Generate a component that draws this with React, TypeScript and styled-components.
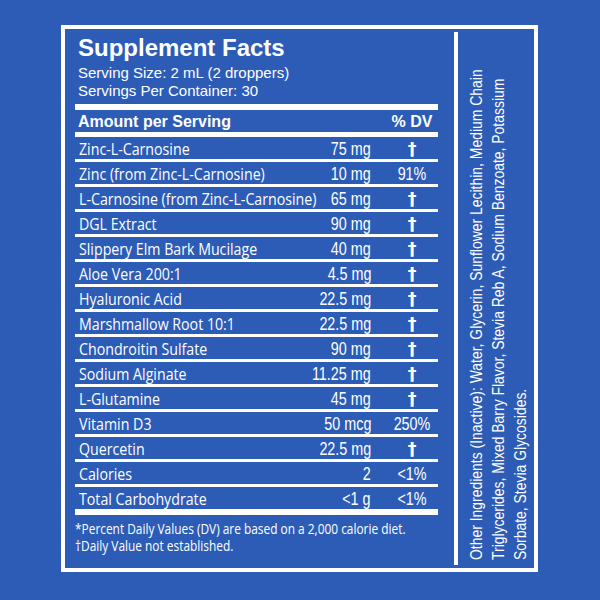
import React from "react";
import styled, { createGlobalStyle } from "styled-components";

const BLUE = "#2c5cb6";
const SANS = `"Liberation Sans", Arial, Helvetica, sans-serif`;
const HUMAN = `"Open Sans", "Noto Sans", sans-serif`;

const GlobalStyle = createGlobalStyle`
  html, body { margin: 0; padding: 0; background: ${BLUE}; }
  body { width: 600px; height: 600px; overflow: hidden; }
`;

const Page = styled.div`
  width: 600px;
  height: 600px;
  box-sizing: border-box;
  padding: 25px 0 0 61px;
  background: ${BLUE};
  color: #fff;
  overflow: hidden;
`;

const Label = styled.div`
  box-sizing: border-box;
  width: 477px;
  height: 547px;
  border: 4px solid #fff;
  display: grid;
  grid-template-columns: 389px 4px 76px;
  grid-template-rows: 539px;
`;

const FactsPanel = styled.div`
  display: flex;
  flex-direction: column;
  padding: 5px 16px 0 10px;
  min-width: 0;
`;

const Title = styled.h1`
  margin: 0 0 0 3px;
  font-family: ${SANS};
  font-weight: 700;
  font-size: 24px;
  line-height: 28px;
`;

const ServingLine = styled.div<{ $first?: boolean }>`
  margin: ${(p) => (p.$first ? "2px" : "0")} 0 0 3px;
  font-family: ${SANS};
  font-size: 15px;
  line-height: 17.5px;
`;

const Rule = styled.div<{ $h: number; $top?: number }>`
  height: ${(p) => p.$h}px;
  margin-top: ${(p) => p.$top ?? 0}px;
  background: #fff;
`;

const HeaderRow = styled.div`
  display: grid;
  grid-template-columns: minmax(0, 1fr) 52px;
  align-items: center;
  height: 22px;
  padding: 1px 0 0 3px;
  box-sizing: border-box;
  font-family: ${SANS};
  font-weight: 700;
  font-size: 16px;
  line-height: 21px;
`;

const HeaderDV = styled.span`
  text-align: center;
  white-space: nowrap;
`;

const Rows = styled.div`
  display: flex;
  flex-direction: column;
`;

const Row = styled.div`
  display: grid;
  grid-template-columns: minmax(0, 1fr) auto 52px;
  column-gap: 15px;
  align-items: center;
  height: 22px;
  padding-left: 4px;
  border-bottom: 3px solid #fff;
  &:last-child {
    border-bottom: 0;
  }
`;

const Name = styled.span`
  font-family: ${HUMAN};
  font-size: 16.5px;
  line-height: 22px;
  white-space: nowrap;
  transform: scaleX(0.86);
  transform-origin: left center;
`;

const Amount = styled.span`
  font-family: ${SANS};
  font-size: 17.5px;
  line-height: 22px;
  padding-top: 1px;
  text-align: right;
  white-space: nowrap;
  transform: scaleX(0.82);
  transform-origin: right center;
`;

const DV = styled.span<{ $dagger?: boolean }>`
  font-family: ${(p) => (p.$dagger ? `"DejaVu Sans", ${SANS}` : SANS)};
  font-weight: ${(p) => (p.$dagger ? 700 : 400)};
  font-size: 17.5px;
  line-height: 22px;
  padding-top: 1px;
  text-align: center;
  white-space: nowrap;
  transform: scaleX(${(p) => (p.$dagger ? 1 : 0.82)});
  transform-origin: center;
`;

const Footnote = styled.div`
  margin-top: 6px;
  font-family: ${HUMAN};
  font-size: 14.5px;
  line-height: 16.5px;
  white-space: nowrap;
  transform: scaleX(0.82);
  transform-origin: left top;
`;

const Divider = styled.div`
  background: #fff;
  margin: 3px 0;
`;

const OtherPanel = styled.div`
  box-sizing: border-box;
  height: 539px;
  padding: 8px 2px 8px 8px;
  min-width: 0;
`;

const OtherText = styled.div`
  height: 100%;
  writing-mode: vertical-rl;
  text-orientation: sideways;
  transform: rotate(180deg);
  font-family: ${SANS};
  font-size: 17px;
  line-height: 22px;
`;

const OtherLine = styled.div`
  white-space: nowrap;
  transform: scaleY(0.82);
  transform-origin: top center;
`;

const rows: [string, string, string][] = [
  ["Zinc-L-Carnosine", "75 mg", "†"],
  ["Zinc (from Zinc-L-Carnosine)", "10 mg", "91%"],
  ["L-Carnosine (from Zinc-L-Carnosine)", "65 mg", "†"],
  ["DGL Extract", "90 mg", "†"],
  ["Slippery Elm Bark Mucilage", "40 mg", "†"],
  ["Aloe Vera 200:1", "4.5 mg", "†"],
  ["Hyaluronic Acid", "22.5 mg", "†"],
  ["Marshmallow Root 10:1", "22.5 mg", "†"],
  ["Chondroitin Sulfate", "90 mg", "†"],
  ["Sodium Alginate", "11.25 mg", "†"],
  ["L-Glutamine", "45 mg", "†"],
  ["Vitamin D3", "50 mcg", "250%"],
  ["Quercetin", "22.5 mg", "†"],
  ["Calories", "2", "<1%"],
  ["Total Carbohydrate", "<1 g", "<1%"],
];

const otherLines = [
  "Other Ingredients (Inactive): Water, Glycerin, Sunflower Lecithin, Medium Chain",
  "Triglycerides, Mixed Barry Flavor, Stevia Reb A, Sodium Benzoate, Potassium",
  "Sorbate, Stevia Glycosides.",
];

export default function App() {
  return (
    <Page>
      <GlobalStyle />
      <Label>
        <FactsPanel>
          <Title>Supplement Facts</Title>
          <ServingLine $first>Serving Size: 2 mL (2 droppers)</ServingLine>
          <ServingLine>Servings Per Container: 30</ServingLine>
          <Rule $h={6} $top={5} />
          <HeaderRow>
            <span>Amount per Serving</span>
            <HeaderDV>% DV</HeaderDV>
          </HeaderRow>
          <Rule $h={5} />
          <Rows>
            {rows.map(([name, amount, dv]) => (
              <Row key={name}>
                <Name>{name}</Name>
                <Amount>{amount}</Amount>
                <DV $dagger={dv === "†"}>{dv}</DV>
              </Row>
            ))}
          </Rows>
          <Rule $h={6} />
          <Footnote>
            *Percent Daily Values (DV) are based on a 2,000 calorie diet.
            <br />
            †Daily Value not established.
          </Footnote>
        </FactsPanel>
        <Divider />
        <OtherPanel>
          <OtherText>
            {otherLines.map((line) => (
              <OtherLine key={line}>{line}</OtherLine>
            ))}
          </OtherText>
        </OtherPanel>
      </Label>
    </Page>
  );
}
